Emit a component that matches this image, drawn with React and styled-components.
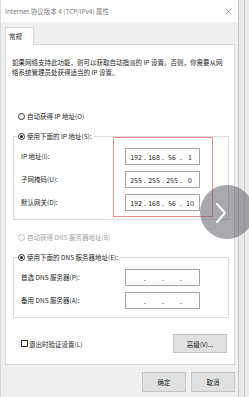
import React from 'react';
import styled, { createGlobalStyle } from 'styled-components';

const GlobalStyle = createGlobalStyle`
  html, body {
    margin: 0;
    padding: 0;
  }
  body {
    background: #ebebeb;
    font-family: "Noto Sans CJK SC", "Noto Sans", sans-serif;
    color: #1e1e1e;
  }
`;

const Screen = styled.div`
  position: relative;
  display: flex;
  width: 249px;
  height: 397px;
  overflow: hidden;
`;

const Window = styled.div`
  display: flex;
  flex-direction: column;
  width: 237px;
  height: 397px;
  background: #f0f0f0;
  border-left: 1px solid #dadada;
  border-right: 1px solid #c9c9c9;
`;

const Gutter = styled.div`
  flex: 1;
  background: linear-gradient(to right, #e9e9e9 0 5px, #cdcdcd 5px 6px, #ececec 6px);
`;

const TitleBar = styled.div`
  display: flex;
  align-items: center;
  justify-content: space-between;
  height: 22px;
  padding: 0 6px 0 4px;
  background: #ffffff;
  font-size: 6.5px;
  color: #7c7c7c;
`;

const Body = styled.div`
  display: flex;
  flex-direction: column;
  padding: 5px 3px 0 4px;
`;

const Tab = styled.div`
  position: relative;
  z-index: 1;
  width: 24px;
  height: 17px;
  margin-bottom: -1px;
  padding-left: 3px;
  background: #ffffff;
  border: 1px solid #d9d9d9;
  border-bottom: none;
  font-size: 6.5px;
  line-height: 17px;
`;

const Panel = styled.div`
  display: flex;
  flex-direction: column;
  background: #ffffff;
  border: 1px solid #d9d9d9;
  padding: 12px 0 11px 6px;
  font-size: 6.5px;
`;

const Intro = styled.p`
  margin: 0;
  line-height: 10px;
  white-space: nowrap;
`;

const OptionRow = styled.label`
  display: flex;
  align-items: center;
  gap: 2px;
  height: 10px;
  line-height: 10px;
  margin: ${(p) => p.$top || 0}px 0 0 6px;
  color: ${(p) => (p.$disabled ? '#a3a3a3' : '#1e1e1e')};
`;

const Radio = styled.span`
  position: relative;
  box-sizing: border-box;
  width: 7px;
  height: 7px;
  border-radius: 50%;
  border: 1px solid ${(p) => (p.$disabled ? '#c4c4c4' : '#333333')};
  background: #ffffff;

  &::after {
    content: '';
    display: ${(p) => (p.$checked ? 'block' : 'none')};
    position: absolute;
    left: 1px;
    top: 1px;
    width: 3px;
    height: 3px;
    border-radius: 50%;
    background: #222222;
  }
`;

const Check = styled.span`
  box-sizing: border-box;
  width: 7px;
  height: 7px;
  border: 1px solid #333333;
  background: #ffffff;
`;

const Group = styled.fieldset`
  margin: 10px 5px 0 1px;
  padding: ${(p) => p.$pad || '0 15px 2px 7px'};
  border: 1px solid #dcdcdc;
  min-width: 0;
`;

const Legend = styled.legend`
  display: flex;
  align-items: center;
  gap: 2px;
  height: 10px;
  margin-left: -3px;
  padding: 0 2px 0 0;
  line-height: 10px;
`;

const HighlightRow = styled.div`
  display: flex;
  margin-top: -4px;
`;

const LabelColumn = styled.div`
  flex: 1;
  display: flex;
  flex-direction: column;
  gap: 6px;
  padding-top: 11px;
`;

const FieldLabel = styled.div`
  height: 17px;
  line-height: 17px;
  white-space: nowrap;
`;

const Highlight = styled.div`
  display: flex;
  flex-direction: column;
  gap: 6px;
  width: 76px;
  padding: 10px 11px 5px 11px;
  border: 1px solid #ef8d8d;
`;

const DnsRows = styled.div`
  display: flex;
  flex-direction: column;
  gap: 6px;
`;

const DnsRow = styled.div`
  display: flex;
  align-items: center;
`;

const IpBox = styled.div`
  box-sizing: border-box;
  display: grid;
  grid-template-columns: 14px 4px 14px 4px 14px 4px 14px;
  align-items: center;
  width: 75px;
  height: 17px;
  padding-left: 3px;
  border: 1px solid #a6a6a6;
  background: #ffffff;
  font-size: 7px;
  color: #1a1a1a;
`;

const Octet = styled.span`
  text-align: center;
`;

const Dot = styled.span`
  text-align: center;
`;

const BottomRow = styled.div`
  display: flex;
  align-items: center;
  justify-content: space-between;
  height: 19px;
  margin: 16px 7px 0 9px;
`;

const CheckLabel = styled.label`
  display: flex;
  align-items: center;
  gap: 1px;
  line-height: 10px;
`;

const Button = styled.button`
  box-sizing: border-box;
  width: ${(p) => p.$w || 44}px;
  height: ${(p) => p.$h || 20}px;
  padding: 0;
  background: #e1e1e1;
  border: 1px solid #c3c3c3;
  font-family: inherit;
  font-size: 6.5px;
  color: #1e1e1e;
`;

const Footer = styled.div`
  display: flex;
  justify-content: flex-end;
  gap: 5px;
  margin-top: 7px;
`;

const Overlay = styled.div`
  position: absolute;
  left: 200px;
  top: 185px;
  width: 54px;
  height: 54px;
  border-radius: 50%;
  background: rgba(95, 95, 105, 0.55);
  display: flex;
  align-items: center;
  justify-content: center;
`;

function IpField({ parts }) {
  const cells = [];
  for (let i = 0; i < 4; i++) {
    cells.push(<Octet key={'o' + i}>{parts ? parts[i] : ''}</Octet>);
    if (i < 3) cells.push(<Dot key={'d' + i}>.</Dot>);
  }
  return <IpBox>{cells}</IpBox>;
}

export default function App() {
  return (
    <Screen>
      <GlobalStyle />
      <Window>
        <TitleBar>
          <span>Internet 协议版本 4 (TCP/IPv4) 属性</span>
          <svg width="7" height="7" viewBox="0 0 7 7">
            <path d="M0.5 0.5 L6.5 6.5 M6.5 0.5 L0.5 6.5" stroke="#8a8a8a" strokeWidth="0.8" />
          </svg>
        </TitleBar>
        <Body>
          <Tab>常规</Tab>
          <Panel>
            <Intro>
              如果网络支持此功能，则可以获取自动指派的 IP 设置。否则，你需要从网
              <br />
              络系统管理员处获得适当的 IP 设置。
            </Intro>

            <OptionRow $top={34}>
              <Radio />
              自动获得 IP 地址(O)
            </OptionRow>

            <Group>
              <Legend>
                <Radio $checked />
                使用下面的 IP 地址(S):
              </Legend>
              <HighlightRow>
                <LabelColumn>
                  <FieldLabel>IP 地址(I):</FieldLabel>
                  <FieldLabel>子网掩码(U):</FieldLabel>
                  <FieldLabel>默认网关(D):</FieldLabel>
                </LabelColumn>
                <Highlight>
                  <IpField parts={['192', '168', '56', '1']} />
                  <IpField parts={['255', '255', '255', '0']} />
                  <IpField parts={['192', '168', '56', '10']} />
                </Highlight>
              </HighlightRow>
            </Group>

            <OptionRow $top={12} $disabled>
              <Radio $disabled />
              自动获得 DNS 服务器地址(B)
            </OptionRow>

            <Group $pad="7px 28px 8px 7px">
              <Legend>
                <Radio $checked />
                使用下面的 DNS 服务器地址(E):
              </Legend>
              <DnsRows>
                <DnsRow>
                  <FieldLabel style={{ flex: 1 }}>首选 DNS 服务器(P):</FieldLabel>
                  <IpField />
                </DnsRow>
                <DnsRow>
                  <FieldLabel style={{ flex: 1 }}>备用 DNS 服务器(A):</FieldLabel>
                  <IpField />
                </DnsRow>
              </DnsRows>
            </Group>

            <BottomRow>
              <CheckLabel>
                <Check />
                退出时验证设置(L)
              </CheckLabel>
              <Button $w={54} $h={19}>高级(V)...</Button>
            </BottomRow>
          </Panel>
          <Footer>
            <Button>确定</Button>
            <Button>取消</Button>
          </Footer>
        </Body>
      </Window>
      <Gutter />
      <Overlay>
        <svg width="14" height="22" viewBox="0 0 14 22" style={{ marginLeft: -12, marginTop: 2 }}>
          <path d="M3 2 L11 11 L3 20" fill="none" stroke="#ffffff" strokeWidth="2" strokeLinecap="round" strokeLinejoin="round" />
        </svg>
      </Overlay>
    </Screen>
  );
}
